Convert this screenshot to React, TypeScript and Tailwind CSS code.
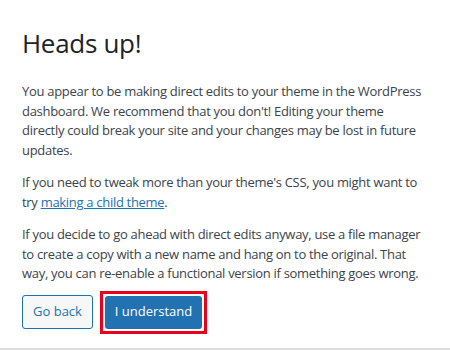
export default function App() {
  return (
    <div className="w-[450px] h-[350px] bg-white flex flex-col font-['Segoe_UI','Open_Sans',sans-serif] text-[13px] leading-[19.5px] text-[#3c434a]">
      <div className="flex-1 px-[22px] pt-[26px]">
        <h2 className="text-[26px] leading-[34px] font-medium tracking-[-0.3px] text-[#1d2327] mb-[22px]">Heads up!</h2>
        <div className="tracking-[-0.3px] whitespace-nowrap">
          <p className="mb-[13px]">
            You appear to be making direct edits to your theme in the WordPress
            <br />
            dashboard. We recommend that you don't! Editing your theme
            <br />
            directly could break your site and your changes may be lost in future
            <br />
            updates.
          </p>
          <p className="mb-[13px]">
            If you need to tweak more than your theme's CSS, you might want to
            <br />
            try <a href="#" className="text-[#2271b1] underline">making a child theme</a>.
          </p>
          <p className="mb-[7px]">
            If you decide to go ahead with direct edits anyway, use a file manager
            <br />
            to create a copy with a new name and hang on to the original. That
            <br />
            way, you can re-enable a functional version if something goes wrong.
          </p>
        </div>
        <div className="flex items-center gap-[7px]">
          <button className="h-[34px] w-[71px] rounded-[3px] border border-[#2271b1] bg-[#f6f7f7] text-[#2271b1] text-[13px]">
            Go back
          </button>
          <div className="border-[3px] border-[#e8001c] p-[2px]">
            <button className="h-[33px] w-[97px] rounded-[3px] bg-[#2271b1] text-white text-[13px]">
              I understand
            </button>
          </div>
        </div>
      </div>
      <div className="h-[2px] bg-[#dcdcde]" />
    </div>
  );
}
